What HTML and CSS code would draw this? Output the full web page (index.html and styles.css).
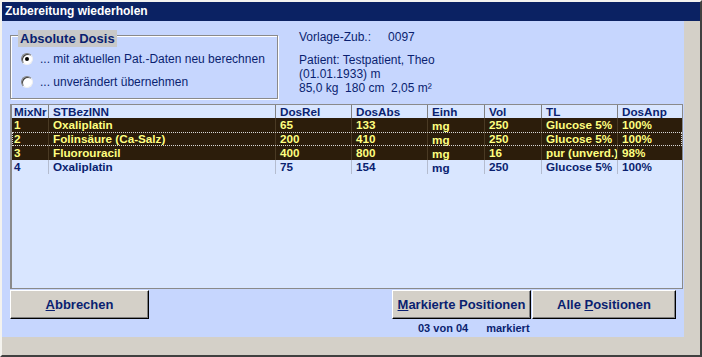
FILE: index.html
```html
<!DOCTYPE html>
<html lang="de">
<head>
  <meta charset="UTF-8">
  <title>Zubereitung wiederholen</title>
  <link rel="stylesheet" href="styles.css">
</head>
<body>
  <div class="window">
    <div class="titlebar">Zubereitung wiederholen</div>
    <div class="frame">
      <div class="client">

        <div class="top">
          <div class="group">
            <span class="legend">Absolute Dosis</span>
            <label class="radio-row"><span class="radio checked"></span>... mit aktuellen Pat.-Daten neu berechnen</label>
            <label class="radio-row"><span class="radio"></span>... unverändert übernehmen</label>
          </div>
          <div class="info">
            <div class="vorlage">Vorlage-Zub.:<span class="nr">0097</span></div>
            <div class="patient">
              <div>Patient: Testpatient, Theo</div>
              <div>(01.01.1933) m</div>
              <div class="pre">85,0 kg  180 cm  2,05 m²</div>
            </div>
          </div>
        </div>

        <div class="grid">
          <div class="row head">
            <div class="cell">MixNr</div><div class="cell">STBezINN</div><div class="cell">DosRel</div><div class="cell">DosAbs</div>
            <div class="cell">Einh</div><div class="cell">Vol</div><div class="cell">TL</div><div class="cell">DosAnp</div>
          </div>
          <div class="row sel">
            <div class="cell">1</div><div class="cell">Oxaliplatin</div><div class="cell">65</div><div class="cell">133</div>
            <div class="cell low">mg</div><div class="cell">250</div><div class="cell">Glucose 5%</div><div class="cell">100%</div>
          </div>
          <div class="row sel focus">
            <div class="cell">2</div><div class="cell">Folinsäure (Ca-Salz)</div><div class="cell">200</div><div class="cell">410</div>
            <div class="cell low">mg</div><div class="cell">250</div><div class="cell">Glucose 5%</div><div class="cell">100%</div>
          </div>
          <div class="row sel">
            <div class="cell">3</div><div class="cell">Fluorouracil</div><div class="cell">400</div><div class="cell">800</div>
            <div class="cell low">mg</div><div class="cell">16</div><div class="cell">pur (unverd.)</div><div class="cell">98%</div>
          </div>
          <div class="row">
            <div class="cell">4</div><div class="cell">Oxaliplatin</div><div class="cell">75</div><div class="cell">154</div>
            <div class="cell low">mg</div><div class="cell">250</div><div class="cell">Glucose 5%</div><div class="cell">100%</div>
          </div>
        </div>

        <div class="actions">
          <button class="btn btn-cancel"><u>A</u>bbrechen</button>
          <div class="right-actions">
            <div class="btn-row">
              <button class="btn btn-mark"><u>M</u>arkierte Positionen</button>
              <button class="btn btn-all">Alle <u>P</u>ositionen</button>
            </div>
            <div class="status"><span>03 von 04</span><span class="marked">markiert</span></div>
          </div>
        </div>

      </div>
    </div>
  </div>
</body>
</html>
```

FILE: styles.css
```css
body {
  margin: 0;
  padding: 0;
  font-family: "Liberation Sans", Arial, sans-serif;
  background: #d4d0c8;
}

.window {
  width: 702px;
  height: 357px;
  box-sizing: border-box;
  border-top: 2px solid #f4f3ef;
  border-left: 2px solid #f4f3ef;
  border-right: 2px solid #404040;
  border-bottom: 2px solid #404040;
  display: flex;
  flex-direction: column;
}

.titlebar {
  height: 19px;
  line-height: 19px;
  background: #0b2263;
  color: #fff;
  font-weight: bold;
  font-size: 12px;
  padding-left: 3px;
}

.frame {
  flex: 1;
  background: #d4d0c8;
  padding: 0 16px 18px 0;
  display: flex;
}

.client {
  flex: 1;
  background: #c6d6fe;
  display: flex;
  flex-direction: column;
  color: #0a1f70;
}

/* haut : groupe + infos patient */
.top {
  display: flex;
  align-items: flex-start;
  padding: 9px 0 0 8px;
  height: 74px;
}

.group {
  position: relative;
  margin-top: 5px;
  border: 1px solid #8a8a8a;
  box-shadow: inset 1px 1px 0 #fff, 1px 1px 0 #fff;
  padding: 17px 0 0 10px;
  display: flex;
  flex-direction: column;
  gap: 11px;
  width: 256px;
  height: 45px;
}

.legend {
  position: absolute;
  top: -6px;
  left: 7px;
  background: #c8c8c8;
  color: #0a1f70;
  font-weight: bold;
  font-size: 13px;
  height: 17px;
  line-height: 17px;
  padding: 0 2px 0 2px;
}

.radio-row {
  display: flex;
  align-items: center;
  font-size: 12px;
  height: 12px;
  white-space: nowrap;
}

.radio {
  width: 10px;
  height: 10px;
  border-radius: 50%;
  background: #fff;
  border: 1px solid;
  border-color: #808080 #f0f0f0 #f0f0f0 #808080;
  box-shadow: inset 1px 1px 0 #404040;
  margin-right: 7px;
  position: relative;
  flex: none;
}

.radio.checked::after {
  content: "";
  position: absolute;
  left: 3px;
  top: 3px;
  width: 4px;
  height: 4px;
  border-radius: 50%;
  background: #000;
}

.info {
  margin-left: 21px;
  font-size: 12px;
  line-height: 14px;
}

.nr {
  margin-left: 17px;
}

.patient {
  margin-top: 9px;
}

.pre {
  white-space: pre;
}

/* tableau */
.grid {
  margin: 0 1px 0 8px;
  height: 185px;
  box-sizing: border-box;
  background: #d9e6ff;
  border: 1px solid #8a8a8a;
  border-left-width: 2px;
  font-size: 11.7px;
  font-weight: bold;
}

.row {
  display: grid;
  grid-template-columns: 36px 227px 76px 76px 57px 57px 76px 64px;
  height: 14px;
  line-height: 14px;
  color: #0a1f70;
}

.cell {
  padding-left: 4px;
  border-left: 1px solid #b4bccf;
  overflow: hidden;
  white-space: nowrap;
}

.row .cell:first-child {
  border-left: none;
  padding-left: 2px;
}

.head {
  height: 13px;
  line-height: 13px;
}

.head .cell {
  border-left-color: #808080;
}

.sel {
  background: #2c1d0b;
  color: #ffff80;
}

.sel .cell {
  border-left-color: #4a3a24;
}

.focus {
  outline: 1px dotted #d8d8d8;
  outline-offset: -1px;
}

.low {
  padding-top: 1px;
}

/* boutons */
.actions {
  display: flex;
  padding: 1px 8px 0 8px;
}

.btn {
  height: 29px;
  background: #d4d0c8;
  border: 1px solid;
  border-color: #fff #000 #000 #fff;
  box-shadow: inset -1px -1px 0 #808080;
  color: #0a1f70;
  font-family: "Liberation Sans", Arial, sans-serif;
  font-weight: bold;
  font-size: 13px;
  padding: 0;
  cursor: pointer;
}

.btn-cancel {
  width: 139px;
}

.right-actions {
  margin-left: auto;
}

.btn-row {
  display: flex;
  gap: 1px;
}

.btn-mark {
  width: 139px;
}

.btn-all {
  width: 144px;
}

.status {
  font-size: 11px;
  font-weight: bold;
  padding: 3px 0 0 26px;
  line-height: 13px;
}

.marked {
  margin-left: 18px;
}
```
